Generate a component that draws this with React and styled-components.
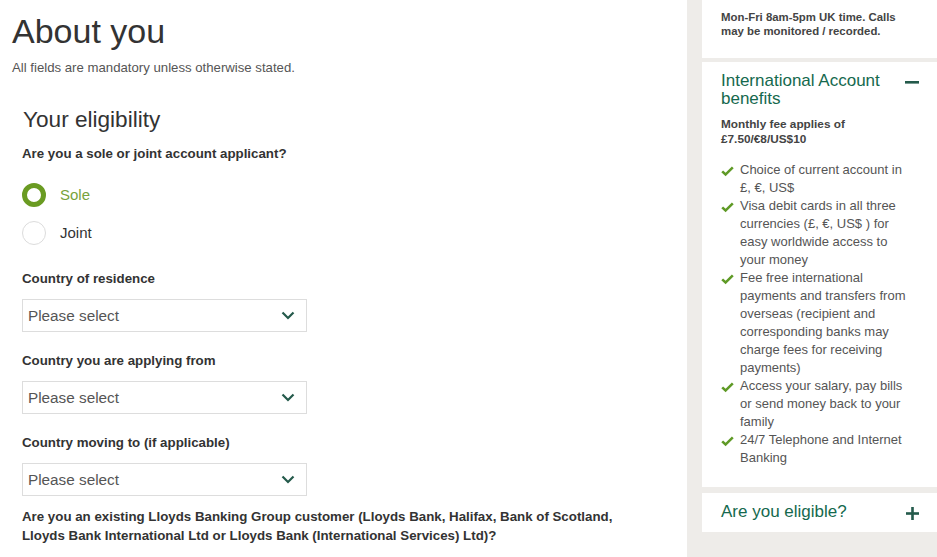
import React, { useState } from "react";
import styled, { createGlobalStyle } from "styled-components";

const GlobalStyle = createGlobalStyle`
  body {
    margin: 0;
    font-family: "Liberation Sans", Arial, sans-serif;
    background: #ffffff;
    color: #333333;
  }
`;

const Page = styled.div`
  display: flex;
  min-height: 557px;
  width: 937px;
  overflow: hidden;
`;

const Main = styled.div`
  width: 687px;
  flex-shrink: 0;
  padding-left: 12px;
  box-sizing: border-box;
`;

const Title = styled.h1`
  margin: 11px 0 0;
  font-size: 34px;
  line-height: 40px;
  font-weight: 400;
  color: #333333;
`;

const Intro = styled.p`
  margin: 9px 0 0;
  font-size: 13.2px;
  line-height: 16px;
  color: #555555;
`;

const Section = styled.section`
  padding-left: 10px;
  margin-top: 31px;
`;

const SectionTitle = styled.h2`
  margin: 0 0 0 1px;
  font-size: 22.6px;
  line-height: 26px;
  font-weight: 400;
  color: #333333;
`;

const Label = styled.div`
  font-size: 13.3px;
  line-height: ${(p) => (p.$multi ? "18.5px" : "16px")};
  font-weight: 700;
  color: #333333;
  margin-top: ${(p) => p.$top}px;
  max-width: 620px;
`;

const RadioGroup = styled.div`
  display: flex;
  flex-direction: column;
  gap: 14px;
  margin-top: 21px;
`;

const RadioRow = styled.label`
  display: flex;
  align-items: center;
  gap: 14px;
  height: 24px;
  cursor: pointer;
`;

const RadioCircle = styled.span`
  width: 24px;
  height: 24px;
  box-sizing: border-box;
  border-radius: 50%;
  border: ${(p) => (p.$checked ? "5.5px solid #6a9b22" : "1px solid #dcdcdc")};
  background: #ffffff;
`;

const RadioText = styled.span`
  font-size: 15px;
  line-height: 24px;
  color: ${(p) => (p.$checked ? "#78a33b" : "#333333")};
`;

const Select = styled.div`
  margin-top: 12px;
  width: 285px;
  height: 33px;
  box-sizing: border-box;
  border: 1px solid #dddddd;
  display: flex;
  align-items: center;
  justify-content: space-between;
  padding: 0 11px 0 5px;
  font-size: 15.3px;
  color: #555555;
  cursor: pointer;
`;

const Sidebar = styled.aside`
  flex: 1;
  background: #eeece9;
  padding-left: 15px;
  display: flex;
  flex-direction: column;
`;

const Card = styled.div`
  background: #ffffff;
  padding: ${(p) => p.$pad};
  margin-bottom: ${(p) => p.$gap || 0}px;
`;

const Hours = styled.p`
  margin: 0;
  font-size: 11.4px;
  line-height: 14px;
  font-weight: 700;
  color: #444444;
`;

const PanelHead = styled.div`
  display: flex;
  justify-content: space-between;
  align-items: flex-start;
`;

const PanelTitle = styled.h3`
  margin: 0;
  font-size: 17px;
  line-height: ${(p) => p.$lh || 18}px;
  font-weight: 400;
  color: #15694e;
  width: 170px;
`;

const Toggle = styled.span`
  width: 14px;
  height: ${(p) => p.$h}px;
  display: flex;
  align-items: center;
  justify-content: center;
  margin-top: ${(p) => p.$top || 0}px;
`;

const Fee = styled.p`
  margin: 9px 0 0;
  font-size: 11.8px;
  line-height: 14.5px;
  font-weight: 700;
  color: #444444;
`;

const Benefits = styled.ul`
  list-style: none;
  margin: 15px 0 0;
  padding: 0 3px 0 0;
`;

const Benefit = styled.li`
  display: flex;
  gap: 6px;
  font-size: 13px;
  line-height: 18px;
  color: #555555;
`;

const Tick = styled.span`
  width: 13px;
  flex-shrink: 0;
  padding-top: 3px;
`;

const Chevron = () => (
  <svg width="14" height="9" viewBox="0 0 14 9">
    <path d="M1.5 1.5 L7 7 L12.5 1.5" fill="none" stroke="#245a4b" strokeWidth="2.2" />
  </svg>
);

const Check = () => (
  <svg width="13" height="11" viewBox="0 0 13 11">
    <path d="M0.3 6.2 L2.1 4.4 L4.6 6.8 L10.9 0.4 L12.7 2.2 L4.6 10.3 Z" fill="#5f9a26" />
  </svg>
);

const Minus = () => (
  <svg width="14" height="3" viewBox="0 0 14 3">
    <rect x="0" y="0" width="14" height="2.6" fill="#245a4b" />
  </svg>
);

const Plus = () => (
  <svg width="13" height="13" viewBox="0 0 13 13">
    <rect x="0" y="5.2" width="13" height="2.6" fill="#245a4b" />
    <rect x="5.2" y="0" width="2.6" height="13" fill="#245a4b" />
  </svg>
);

const benefits = [
  "Choice of current account in £, €, US$",
  "Visa debit cards in all three currencies (£, €, US$ ) for easy worldwide access to your money",
  "Fee free international payments and transfers from overseas (recipient and corresponding banks may charge fees for receiving payments)",
  "Access your salary, pay bills or send money back to your family",
  "24/7 Telephone and Internet Banking",
];

const countryFields = [
  { label: "Country of residence", top: 26 },
  { label: "Country you are applying from", top: 21 },
  { label: "Country moving to (if applicable)", top: 21 },
];

const App = () => {
  const [applicant, setApplicant] = useState("Sole");

  return (
    <>
      <GlobalStyle />
      <Page>
        <Main>
          <Title>About you</Title>
          <Intro>All fields are mandatory unless otherwise stated.</Intro>
          <Section>
            <SectionTitle>Your eligibility</SectionTitle>
            <Label $top={13}>Are you a sole or joint account applicant?</Label>
            <RadioGroup>
              {["Sole", "Joint"].map((opt) => (
                <RadioRow key={opt} onClick={() => setApplicant(opt)}>
                  <RadioCircle $checked={applicant === opt} />
                  <RadioText $checked={applicant === opt}>{opt}</RadioText>
                </RadioRow>
              ))}
            </RadioGroup>
            {countryFields.map((f) => (
              <div key={f.label}>
                <Label $top={f.top}>{f.label}</Label>
                <Select>
                  <span>Please select</span>
                  <Chevron />
                </Select>
              </div>
            ))}
            <Label $top={12} $multi>
              Are you an existing Lloyds Banking Group customer (Lloyds Bank, Halifax, Bank of Scotland, Lloyds
              Bank International Ltd or Lloyds Bank (International Services) Ltd)?
            </Label>
          </Section>
        </Main>
        <Sidebar>
          <Card $pad="10px 18px 20px 19px" $gap={4}>
            <Hours>
              Mon-Fri 8am-5pm UK time. Calls
              <br />
              may be monitored / recorded.
            </Hours>
          </Card>
          <Card $pad="10px 18px 20px 19px" $gap={6}>
            <PanelHead>
              <PanelTitle>International Account benefits</PanelTitle>
              <Toggle $h={18} $top={1}>
                <Minus />
              </Toggle>
            </PanelHead>
            <Fee>
              Monthly fee applies of
              <br />
              £7.50/€8/US$10
            </Fee>
            <Benefits>
              {benefits.map((b) => (
                <Benefit key={b}>
                  <Tick>
                    <Check />
                  </Tick>
                  <span>{b}</span>
                </Benefit>
              ))}
            </Benefits>
          </Card>
          <Card $pad="9px 18px 9px 19px">
            <PanelHead>
              <PanelTitle $lh={19}>Are you eligible?</PanelTitle>
              <Toggle $h={19} $top={2}>
                <Plus />
              </Toggle>
            </PanelHead>
          </Card>
        </Sidebar>
      </Page>
    </>
  );
};

export default App;
